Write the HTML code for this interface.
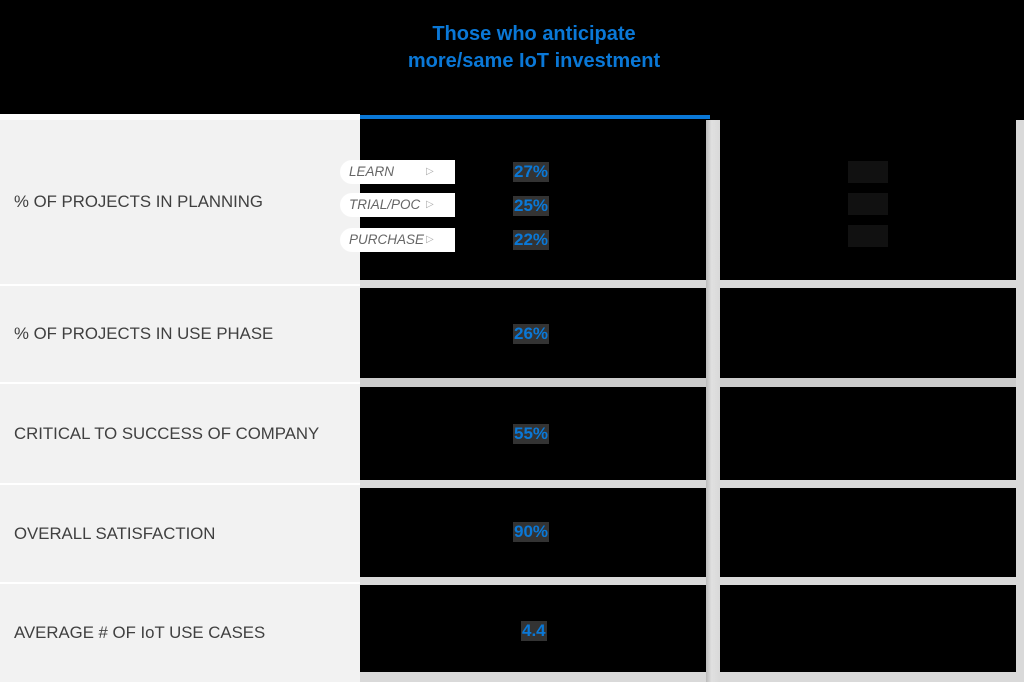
<!DOCTYPE html>
<html><head><meta charset="utf-8"><style>
body{margin:0;width:1024px;height:682px;background:#000;position:relative;overflow:hidden;font-family:"Liberation Sans",sans-serif}
div{position:absolute}
.t{left:0;width:1024px;text-align:center;color:#0a78d7;font-weight:bold;font-size:20px}
.lab{left:0;width:360px;background:#f2f2f2;border-top:2px solid #fff;box-sizing:border-box}
.lab span{position:absolute;left:14px;top:50%;transform:translateY(-50%);color:#404040;font-size:16.8px;white-space:nowrap}
.h{left:360px;width:664px;height:8px;background:#d9d9d9}
.v{background:#d9d9d9;width:8px}
.val{color:#0a78d7;font-weight:bold;font-size:17px;background:#333;padding:0 1px;line-height:20px}
.pill{left:340px;width:115px;height:24px;background:#fff;border-radius:12px 0 0 12px}
.pill span{position:absolute;left:9px;top:4px;font-size:13.5px;font-style:italic;color:#666}
.pill i{position:absolute;left:86px;top:6px;font-size:10px;color:#aaa;font-style:normal}
</style></head><body>
<div class="t" style="top:23px;left:22px">Those who anticipate</div>
<div class="t" style="top:50px;left:22px">more/same IoT investment</div>
<div style="left:360px;top:115px;width:350px;height:4px;background:#0a78d7"></div>
<div style="left:0;top:114px;width:360px;height:6px;background:#fff"></div>
<div class="lab" style="top:118px;height:166px"><span>% OF PROJECTS IN PLANNING</span></div>
<div class="lab" style="top:284px;height:98px"><span>% OF PROJECTS IN USE PHASE</span></div>
<div class="lab" style="top:382px;height:101px"><span>CRITICAL TO SUCCESS OF COMPANY</span></div>
<div class="lab" style="top:483px;height:99px"><span>OVERALL SATISFACTION</span></div>
<div class="lab" style="top:582px;height:100px"><span>AVERAGE # OF IoT USE CASES</span></div>
<div class="h" style="top:280px"></div>
<div class="h" style="top:378px;height:9px;background:#ccc"></div>
<div class="h" style="top:480px"></div>
<div class="h" style="top:577px"></div>
<div class="h" style="top:672px;height:10px"></div>
<div class="v" style="left:706px;top:120px;height:562px;width:14px;background:linear-gradient(90deg,#bbb,#e0e0e0 40%,#d9d9d9)"></div>
<div class="v" style="left:1016px;top:120px;height:562px"></div>
<div class="pill" style="top:160px"><span>LEARN</span><i>▷</i></div>
<div class="pill" style="top:193px"><span>TRIAL/POC</span><i>▷</i></div>
<div class="pill" style="top:228px"><span>PURCHASE</span><i>▷</i></div>
<div class="val" style="left:513px;top:162px">27%</div>
<div class="val" style="left:513px;top:196px">25%</div>
<div class="val" style="left:513px;top:230px">22%</div>
<div class="val" style="left:513px;top:324px">26%</div>
<div class="val" style="left:513px;top:424px">55%</div>
<div class="val" style="left:513px;top:522px">90%</div>
<div class="val" style="left:521px;top:621px">4.4</div>
<div style="left:848px;top:161px;width:40px;height:22px;background:#111"></div>
<div style="left:848px;top:193px;width:40px;height:22px;background:#111"></div>
<div style="left:848px;top:225px;width:40px;height:22px;background:#111"></div>
</body></html>
